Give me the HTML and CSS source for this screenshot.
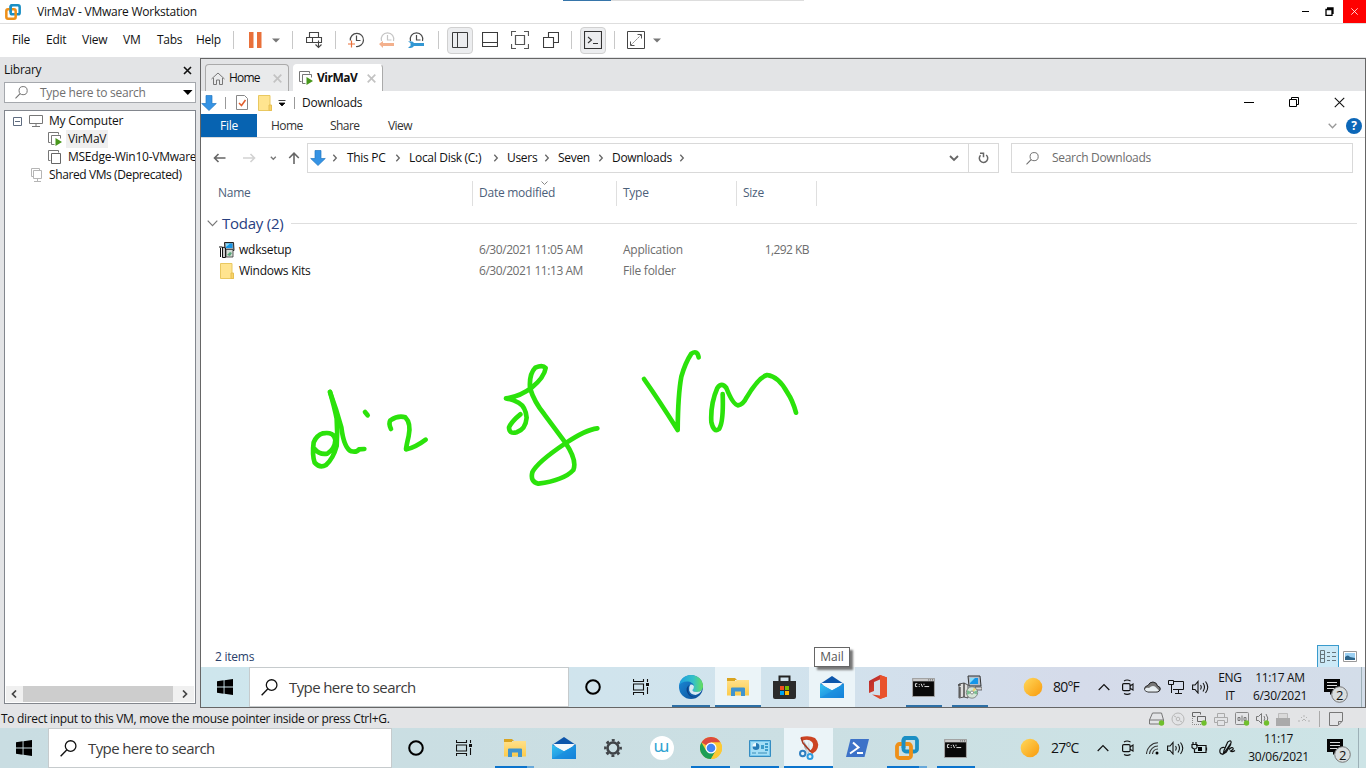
FILE: index.html
```html
<!DOCTYPE html>
<html lang="en">
<head>
<meta charset="utf-8">
<title>VirMaV - VMware Workstation</title>
<link rel="stylesheet" href="styles.css">
</head>
<body>
<svg class="defs" width="0" height="0">
  <defs>
    <linearGradient id="sunG" x1="0" y1="0" x2="1" y2="1"><stop offset="0" stop-color="#ffd95c"/><stop offset="1" stop-color="#f99a0c"/></linearGradient>
    <linearGradient id="edgeA" x1="0" y1="0" x2="1" y2="0"><stop offset="0" stop-color="#1b9de0"/><stop offset=".6" stop-color="#35c1c6"/><stop offset="1" stop-color="#66e05a"/></linearGradient>
    <linearGradient id="edgeB" x1="0" y1="0" x2="1" y2="1"><stop offset="0" stop-color="#1b8fdc"/><stop offset="1" stop-color="#0c4a94"/></linearGradient>
    <linearGradient id="foldG" x1="0" y1="0" x2="0" y2="1"><stop offset="0" stop-color="#ffe08a"/><stop offset="1" stop-color="#fccb4b"/></linearGradient>
    <linearGradient id="offG" x1="0" y1="0" x2="1" y2="1"><stop offset="0" stop-color="#b3252c"/><stop offset="1" stop-color="#f0592b"/></linearGradient>
    <linearGradient id="mailG" x1="0" y1="0" x2="1" y2="1"><stop offset="0" stop-color="#35c3f3"/><stop offset="1" stop-color="#1277d3"/></linearGradient>
  </defs>
  <symbol id="vmware" viewBox="0 0 24 24"><rect x="8.500" y="2" width="13.500" height="13.500" rx="2.500" fill="none" stroke="#1b8fc4" stroke-width="3.800"/><rect x="2" y="8" width="14" height="14" rx="2.500" fill="none" stroke="#ee9019" stroke-width="3.800"/><path d="M8.500 12V4.500q0-2.500 2.500-2.500" fill="none" stroke="#1b8fc4" stroke-width="3.800"/></symbol>
  <symbol id="lens" viewBox="0 0 16 16"><circle cx="10" cy="5.7" r="5" fill="none" stroke="currentColor" stroke-width="1.2"/><path d="M6.3 9.4.6 15.3" stroke="currentColor" stroke-width="1.3"/></symbol>
  <symbol id="win" viewBox="0 0 16 16"><path d="M0 2.3 6.6 1.3V7.6H0zM7.5 1.2 16 0V7.6H7.500zM0 8.500h6.600v6.200L0 13.800zM7.500 8.500H16V16L7.500 14.800z"/></symbol>
  <symbol id="task" viewBox="0 0 16 16"><path d="M.5 0v2.500h10V0M.5 16v-2.500h10V16M.5 5h10v6H.5zM14.500 0v3M14.500 8v7" fill="none" stroke="#111" stroke-width="1.100"/><path d="M13 4h3v3h-3z" fill="#111"/></symbol>
  <symbol id="down" viewBox="0 0 16 16"><path d="M5 .5h6v8h4.300L8 15.500.7 8.500H5z" fill="#3593e4" stroke="#2478c2" stroke-width=".7"/></symbol>
  <symbol id="folder" viewBox="0 0 14 16"><path d="M.5.500h11.500V11l1.500.5V15.500H.5z" fill="#ffe48f" stroke="#e9c860"/><path d="M11 10h2.500v5.500H11z" fill="#f8d368" stroke="#e6bf52"/></symbol>
  <symbol id="explorer" viewBox="0 0 22 18"><path d="M0 0h8l2 2h-2v2H0z" fill="#d9a420"/><path d="M0 3h8l2-1h12v15.500H0z" fill="url(#foldG)"/><path d="M4 18v-7.500q0-1 1-1h12q1 0 1 1V18h-4v-4.500H8V18z" fill="#3f94cf"/></symbol>
  <symbol id="mail" viewBox="0 0 24 22"><path d="M0 8 12 0l12 8v3H0z" fill="#0c55ab"/><path d="M1 7h22L12 17z" fill="#f4f8fc"/><path d="M0 7.500 12 14 24 7.500V22H0z" fill="url(#mailG)"/><path d="M2 8.500 22 8.500 12 14z" fill="#f4f8fc"/><path d="M0 22 24 8v14z" fill="#178bdf" opacity=".55"/></symbol>
  <symbol id="cmd" viewBox="0 0 24 20"><path d="M.5.500h23v19H.5z" fill="#090909" stroke="#a5a5a5"/><path d="M1 1h22v2.500H1z" fill="#c9c9c9"/><path d="M17 2h1M19 2h1M21 2h1" stroke="#444"/><path d="M5.500 6H3.500v3h2M7.500 6.500v1M7.500 8.500v1M9.500 6l1.500 3.500M12.500 6v1.500M13 9h5" fill="none" stroke="#e8e8e8"/></symbol>
  <symbol id="setup" viewBox="0 0 24 24"><path d="M10 1h12l1 10H11z" fill="#b5bfca" stroke="#333"/><path d="M12 3h8v6h-8z" fill="#1595e8"/><path d="M12 3h5l-5 5z" fill="#89dcf8"/><path d="M17 12h7v3h-6z" fill="#d5d5d5" stroke="#444" stroke-width=".7"/><path d="M1 9l5-1v14l-5 1zM6 8l4 2v13l-4-1z" fill="#dedede" stroke="#444" stroke-width=".9"/><path d="M0 10h3M2 12v10" stroke="#222"/><circle cx="14" cy="17.500" r="5.700" fill="#d5e5d7" stroke="#666" stroke-width=".7"/><path d="M14 17.500 9 15v5zM14 17.500l5-2v4z" fill="#7bbd91"/><path d="m14 17.500 2-5 2 2z" fill="#eed26e"/><circle cx="14" cy="17.500" r="1.500" fill="#fff" stroke="#555" stroke-width=".6"/></symbol>
  <symbol id="setupsm" viewBox="0 0 16 16"><path d="M5.500.5h9l.5 8H6z" fill="#9aa6b0" stroke="#222"/><path d="M7 1.500h6.500V6H7z" fill="#1595e8"/><path d="M7 1.500h4L7 5z" fill="#89dcf8"/><path d="M0 5h3M1.500 6v9M3.500 5v10.500h3V6z" fill="#ccc" stroke="#111"/><path d="M7 7.500h7V15H7z" fill="#d4ddd5" stroke="#333" stroke-width=".8"/><path d="M8 13l3-3 2 1-2 3z" fill="#59a578"/></symbol>
  <symbol id="sun" viewBox="0 0 20 20"><circle cx="10" cy="10" r="9.300" fill="url(#sunG)"/></symbol>
  <symbol id="up" viewBox="0 0 12 8"><path d="m.7 7 5.300-5.500L11.300 7" fill="none" stroke="#111" stroke-width="1.200"/></symbol>
  <symbol id="meet" viewBox="0 0 12 16"><rect x=".6" y="4.600" width="7.500" height="7" rx="1.200" fill="none" stroke="#111" stroke-width="1.200"/><path d="m8 7 3-2v6L8 9.300M2 2q3-2 6.500 0M2 14.500q3 1.700 6.500 0" fill="none" stroke="#111" stroke-width="1.100"/></symbol>
  <symbol id="sound" viewBox="0 0 17 14"><path d="M.6 5h2.400l3-3.500v11.500L3 9.500H.6zM8.500 5q1.500 2 0 4.500M11 3q3 4 0 8.500M13.500 1.500q4.500 5.500 0 11.500" fill="none" stroke="#111" stroke-width="1.100"/></symbol>
  <symbol id="note" viewBox="0 0 25 24"><path d="M0 0h16v13h-7l-3 3v-3H0z" fill="#050505"/><path d="M3 3.500h10M3 6.500h10M3 9.500h7" stroke="#ddd"/><circle cx="15.500" cy="15.500" r="7.800" fill="#d9dedf" stroke="#777"/></symbol>
  <symbol id="vms" viewBox="0 0 14 14"><path d="M2.500 10.500H.5V.5h10v2" fill="none" stroke="#777"/><path d="M3.500 3.500h9v10h-9z" fill="#fff" stroke="#666"/></symbol>
  <symbol id="vmrun" viewBox="0 0 14 14"><path d="M2.500 10.500H.5V.5h10v2M6.500 12.500h-3v-9h9v3" fill="none" stroke="#777"/><path d="M7.500 6v8L14 10z" fill="#48971c"/></symbol>
  <symbol id="gt" viewBox="0 0 6 8"><path d="m1.300.8 3 3.200-3 3.200" fill="none" stroke="#666" stroke-width="1.300"/></symbol>
  <symbol id="clock" viewBox="0 0 18 16"><path d="M2.300 8.500A6.600 6.600 0 1 1 8 14.500M8.500 3.500v5h4" fill="none" stroke="currentColor" stroke-width="1.200"/></symbol>
  <symbol id="clocktop" viewBox="0 0 18 16"><path d="M2.500 9A6.300 6.300 0 1 1 14.500 9M8.500 3v5h4" fill="none" stroke="currentColor" stroke-width="1.200"/></symbol>
  <symbol id="x" viewBox="0 0 10 10"><path d="m.7.700 8.600 8.600M9.300.700.7 9.300" fill="none" stroke="currentColor"/></symbol>
</svg>

<div class="screen">
  <header class="titlebar">
    <svg width="16" height="16"><use href="#vmware"/></svg>
    <span class="title">VirMaV - VMware Workstation</span>
    <span class="peek"></span>
    <svg width="8" height="8"><path d="M0 3.500h7" stroke="#000"/></svg>
    <svg width="9" height="9"><path d="M1 2.500h6V8.500H1zM2 1h6v6" fill="none" stroke="#000" stroke-width="1.300"/></svg>
    <span class="close"><svg width="7" height="7" viewBox="0 0 7 7"><path d="m.3.300 6.400 6.400M6.700.300.3 6.700" stroke="#fff" stroke-width=".8"/></svg></span>
  </header>

  <nav class="menubar">
    <span>File</span><span>Edit</span><span>View</span><span>VM</span><span>Tabs</span><span>Help</span>
    <i class="sep"></i>
    <svg width="13" height="16"><path d="M0 0h4.500v16H0zM8 0h4.500v16H8z" fill="#e9703a"/></svg>
    <svg width="8" height="5"><path d="M0 .500h8L4 4.500z" fill="#777"/></svg>
    <i class="sep"></i>
    <svg width="17" height="17"><path d="M3.500 5.500V.5h9v5M.5 5.500h15v5H.5zM6.500 5.500v5M12.500 8.500v7M9.500 12.500l3 3 3-3" fill="none" stroke="#444" stroke-width="1.100"/></svg>
    <i class="sep"></i>
    <svg class="dark" width="18" height="16"><use href="#clock"/><path d="M0 12h7M3.500 8.500v7" stroke="#e9703a" stroke-width="1.200"/></svg>
    <svg class="pale" width="18" height="16"><use href="#clocktop"/><path d="M0 12 4 9v2h11v3H4v2z" fill="#f3b08c"/></svg>
    <svg class="dark" width="18" height="16"><use href="#clocktop"/><path d="M0 9.500q5-1 6 1.500h10v3H6Q4 17 0 15.500l2.500-1.500v-3z" fill="#3297d3"/></svg>
    <i class="sep"></i>
    <b class="tool on"><svg width="16" height="16"><path d="M.5.500h15v15H.5zM5.500.500v15" fill="none" stroke="#3b3b3b"/></svg></b>
    <b class="tool"><svg width="16" height="16"><path d="M.5.500h15v14H.5zM.5 10.500h15" fill="none" stroke="#3b3b3b" stroke-width="1.100"/></svg></b>
    <b class="tool"><svg width="18" height="18"><path d="M.5 5V.5H5M13 .500h4.500V5M17.500 13v4.500H13M5 17.500H.5V13M4.500 4.500h9v9h-9z" fill="none" stroke="#555" stroke-width="1.200"/></svg></b>
    <b class="tool"><svg width="16" height="16"><path d="M5.500 5V.5h10v10H11M.5 5.500h10v10H.5z" fill="none" stroke="#3b3b3b" stroke-width="1.100"/></svg></b>
    <i class="sep"></i>
    <b class="tool on"><svg width="18" height="18"><path d="M.5.500h17v17H.5zM4 6l3.500 3L4 12M9 12.500h5" fill="none" stroke="#333" stroke-width="1.100"/></svg></b>
    <i class="sep"></i>
    <b class="tool"><svg width="18" height="18"><path d="M.5.500h17v17H.5z" fill="none" stroke="#444"/><path d="M10.500 3.500h4v4M3.500 10.500v4h4" fill="none" stroke="#555"/><path d="M14 4 4 14" stroke="#777" stroke-dasharray="2 1"/></svg></b>
    <svg width="8" height="5"><path d="M0 .500h8L4 4.500z" fill="#777"/></svg>
  </nav>

  <main class="work">
    <aside class="library">
      <div class="lib-head"><span>Library</span><svg width="9" height="9"><path d="m1 1 7 7M8 1 1 8" stroke="#111" stroke-width="1.600"/></svg></div>
      <div class="lib-search"><svg width="13" height="13"><use href="#lens"/></svg><span>Type here to search</span><svg width="10" height="6"><path d="M0 0h9.500L4.800 5z"/></svg></div>
      <div class="tree">
        <div class="node root"><svg width="9" height="9"><path d="M.5.500h8v8h-8zM2 4.500h5" fill="none" stroke="#5f6c80"/></svg><svg width="14" height="12"><path d="M.5.500h13v8H.5zM7 9v2M3 11.500h8" fill="none" stroke="#777"/></svg><span>My Computer</span></div>
        <div class="node"><svg width="14" height="14"><use href="#vmrun"/></svg><span class="sel">VirMaV</span></div>
        <div class="node"><svg width="14" height="14"><use href="#vms"/></svg><span class="long">MSEdge-Win10-VMware</span></div>
        <div class="node shared"><svg width="12" height="14"><path d="M2.500 8.500h-2v-8h8v2M2.500 2.500h8v8h-8zM6.500 11v2M3 13.500h7" fill="none" stroke="#b5b5b5"/></svg><span class="snug">Shared VMs (Deprecated)</span></div>
        <div class="hscroll"><svg width="6" height="8"><path d="M5 .5 1.500 4 5 7.500" fill="none" stroke="#444" stroke-width="1.700"/></svg><i></i><svg width="6" height="8"><path d="M1 .5 4.500 4 1 7.500" fill="none" stroke="#444" stroke-width="1.700"/></svg></div>
      </div>
    </aside>

    <section class="console">
      <div class="tabs">
        <div class="tab"><svg width="14" height="13"><path d="m.5 7 6.500-6 6.500 6M2.500 6v6.500h3V8h3v4.500h3V6" fill="none" stroke="#777"/></svg><span class="snug">Home</span><svg width="9" height="9"><path d="m.7.700 7.600 7.600M8.300.700.7 8.300" stroke="#c3c3c3" stroke-width="1.700"/></svg></div>
        <div class="tab active"><svg width="14" height="14"><use href="#vmrun"/></svg><span>VirMaV</span><svg width="9" height="9"><path d="m.7.700 7.600 7.600M8.300.700.7 8.300" stroke="#c3c3c3" stroke-width="1.700"/></svg></div>
      </div>

      <div class="explorer">
        <div class="quick">
          <svg width="16" height="16"><use href="#down"/></svg><i></i>
          <svg width="12" height="15"><path d="M.5.500h8l3 3v11H.5z" fill="#fff" stroke="#888"/><path d="m3 8 2.500 2.500L9.500 5" fill="none" stroke="#e15e2d" stroke-width="1.500"/></svg>
          <svg width="14" height="16"><use href="#folder"/></svg>
          <svg width="8" height="8"><path d="M.5 1.500h7M1 4h6L4 7z" stroke="#111" stroke-width=".8"/></svg><i></i>
          <span>Downloads</span>
          <svg width="10" height="10"><path d="M0 4.500h10" stroke="#000"/></svg>
          <svg width="11" height="11"><path d="M.5 2.500h7v7h-7zM2.500 2V.5h7v7H8" fill="none" stroke="#000"/></svg>
          <svg width="11" height="11"><use href="#x"/></svg>
        </div>
        <div class="ribbon">
          <b>File</b><span>Home</span><span>Share</span><span>View</span>
          <svg width="9" height="6"><path d="m.7.700 3.800 4 3.800-4" fill="none" stroke="#999" stroke-width="1.300"/></svg>
          <em>?</em>
        </div>
        <div class="address">
          <svg width="13" height="10"><path d="M12.500 5H1.500M5.500 1l-4 4 4 4" fill="none" stroke="#666" stroke-width="1.600"/></svg>
          <svg width="13" height="10"><path d="M0 5h11.500M7.500 1l4 4-4 4" fill="none" stroke="#d2d2d2" stroke-width="1.600"/></svg>
          <svg width="7" height="5"><path d="m.8.800 2.500 2.500L5.800.800" fill="none" stroke="#777" stroke-width="1.300"/></svg>
          <svg width="12" height="12"><path d="M6 12V1.500M1.200 6 6 1.200 10.800 6" fill="none" stroke="#666" stroke-width="1.600"/></svg>
          <div class="crumbs">
            <svg width="16" height="16"><use href="#down"/></svg><svg width="6" height="8"><use href="#gt"/></svg>
            <span>This PC</span><svg width="6" height="8"><use href="#gt"/></svg>
            <span>Local Disk (C:)</span><svg width="6" height="8"><use href="#gt"/></svg>
            <span>Users</span><svg width="6" height="8"><use href="#gt"/></svg>
            <span>Seven</span><svg width="6" height="8"><use href="#gt"/></svg>
            <span>Downloads</span><svg width="6" height="8"><use href="#gt"/></svg>
            <svg width="10" height="7"><path d="m1 1 4 4 4-4" fill="none" stroke="#666" stroke-width="1.800"/></svg>
            <div class="refresh"><svg width="11" height="12" viewBox="0 0 11 12"><path d="M8.200 3A4.200 4.200 0 1 1 2.500 3.300M2 1.200h3.500v4" fill="none" stroke="#666" stroke-width="1.500"/></svg></div>
          </div>
          <div class="find"><svg width="13" height="13"><use href="#lens"/></svg><span>Search Downloads</span></div>
        </div>
        <div class="columns"><span>Name</span><span>Date modified<svg width="7" height="4"><path d="m.5.500 3 3 3-3" fill="none" stroke="#888"/></svg></span><span>Type</span><span>Size</span></div>
        <div class="group"><svg width="11" height="7"><path d="m.7.700 4.800 5 4.800-5" fill="none" stroke="#777" stroke-width="1.200"/></svg><span>Today (2)</span><i></i></div>
        <div class="file"><svg width="16" height="16"><use href="#setupsm"/></svg><b>wdksetup</b><span class="date">6/30/2021 11:05 AM</span><span>Application</span><span class="size">1,292 KB</span></div>
        <div class="file"><svg class="dir" width="14" height="16"><use href="#folder"/></svg><b>Windows Kits</b><span class="date">6/30/2021 11:13 AM</span><span>File folder</span><span></span></div>
        <svg class="ink" viewBox="201 282 1164 363">
          <g transform="translate(290 340) scale(.33333)">
            <path d="M120 156Q134 204 140 236Q143 275 140 318Q130 355 108 375Q90 386 74 368Q66 345 71 307Q80 286 99 280Q132 274 136 300Q135 326 112 341Q88 345 74 327"/>
            <path d="M120 156Q140 210 154 262Q162 325 184 334Q200 338 207 328L223 327"/>
            <path d="M225 216l8 10"/>
            <path d="M303 267Q295 250 301 241Q325 225 346 232Q364 250 356 288Q349 318 348 328Q374 324 407 299"/>
            <path d="M691 223Q665 244 657 262Q657 283 680 277Q707 268 710 233Q707 200 686 188Q668 178 648 175Q690 170 725 143Q763 112 767 84Q758 73 736 83Q717 102 720 144Q732 185 763 223L826 308Q862 361 850 390Q822 421 745 431Q720 425 727 397Q741 367 826 310Q887 269 922 265"/>
          </g>
          <g transform="translate(610 340) scale(.33333)">
            <path d="M102 117Q145 178 203 270Q204 164 214 110Q226 68 244 41Q262 29 266 52"/>
            <path d="M338 162Q341 248 327 267Q311 279 304 246Q301 192 322 144Q335 125 349 144Q369 194 384 196Q399 195 410 172Q446 112 471 105Q506 109 532 158Q548 181 558 218"/>
          </g>
        </svg>
        <div class="foot"><span>2 items</span>
          <b><svg width="16" height="13"><path d="M.5.500h4v12h-4zM.5 4.500h4M.5 8.500h4M7 2.500h3M12 2.500h4M7 6.500h3M12 6.500h4M7 10.500h3M12 10.500h4" fill="none" stroke="#66757c"/></svg></b>
          <svg width="14" height="11"><path d="M.5.500h13v10H.5z" fill="#fff" stroke="#999"/><path d="M2 2h10v7H2z" fill="#9bd0f3"/><path d="M2 6q3-3 5 0l5 1v2H2z" fill="#2c6489"/></svg>
        </div>
      </div>

      <div class="bar guest">
        <div class="cell"><svg width="16" height="16"><use href="#win"/></svg></div>
        <div class="search"><svg width="17" height="17"><use href="#lens"/></svg><span>Type here to search</span></div>
        <div class="cell"><svg width="16" height="16"><circle cx="8" cy="8" r="6.800" fill="none" stroke="#000" stroke-width="2"/></svg></div>
        <div class="cell early"><svg width="16" height="16"><use href="#task"/></svg></div>
        <div class="cell run"><svg width="24" height="24" viewBox="0 0 24 24"><circle cx="12" cy="12" r="12" fill="url(#edgeB)"/><path d="M.3 10C1.500 3.500 6.500 0 12 0c7 0 12 5 12 11 0 4-3 6-6 6-3 0-4.500-1.200-4.500-2 0-.7 1.500-1.500 1.500-3.500C15 8.500 11.500 6.500 8 6.500 4 6.500 1.300 8.500.3 10z" fill="url(#edgeA)"/><path d="M10 10q-4 3-1.500 8 3 5.500 9.500 4-7 .5-8.500-5-.8-4 .5-7z" fill="#0b3f86"/><path d="M15 11.500q0 2-1.500 3.500c0 1 1.500 2 4.500 2q3 0 5-2-2 4-6.500 5-5-.5-6.300-4.500-.7-3.500 1.300-6 3-.5 3.500 2z" fill="#d7eaf3"/></svg></div>
        <div class="cell run lit"><svg width="22" height="18"><use href="#explorer"/></svg></div>
        <div class="cell early"><svg width="23" height="25"><path d="M6.500 7V1.500h10V7" fill="none" stroke="#222" stroke-width="2"/><path d="M0 6h23v16q0 2-2 2H2q-2 0-2-2z" fill="#2b2b2b"/><path d="M7 11h4v4H7z" fill="#f25022"/><path d="M12 11h4v4h-4z" fill="#7fba00"/><path d="M7 16h4v4H7z" fill="#00a4ef"/><path d="M12 16h4v4h-4z" fill="#ffb900"/></svg></div>
        <div class="cell lit tip"><svg width="24" height="22"><use href="#mail"/></svg><span class="tooltip">Mail</span></div>
        <div class="cell"><svg width="18" height="24"><path d="M0 6 11 0l7 2.500v19L11 24 3 19.500l8 1V4.500L5 7v9L0 18z" fill="url(#offG)"/><path d="m11 0 7 2.500v19L11 24z" fill="#e9532c"/></svg></div>
        <div class="cell run early"><svg width="23" height="19"><use href="#cmd"/></svg></div>
        <div class="cell run"><svg width="24" height="24"><use href="#setup"/></svg></div>
        <div class="tray">
          <svg width="20" height="20"><use href="#sun"/></svg><span class="temp">80°F</span>
          <svg width="12" height="8"><use href="#up"/></svg>
          <svg width="12" height="16"><use href="#meet"/></svg>
          <svg width="17" height="12"><path d="M4 11Q.5 10.500.5 7.500 1 5 4 4.500 5.500 1 9 1q4 .5 4.500 4 2.800.5 2.800 3-.3 2.500-3 3z" fill="#777" stroke="#222"/><path d="M4 10.500Q1 10 1 8q2-2 4-1 3-3 6-1.500l4 4q-1 1-3 1z" fill="#e7eef2"/></svg>
          <svg width="16" height="14"><path d="M5 1.500h10.500v8H5M10.500 10v3M7 13.500h7M.5.500h5v4H.5zM3.500 5v8" fill="none" stroke="#111"/></svg>
          <svg width="17" height="14"><use href="#sound"/></svg>
          <span class="stack">ENG<br>IT</span><span class="stack wide">11:17 AM<br>6/30/2021</span>
          <div class="note"><svg width="25" height="24"><use href="#note"/></svg><span>2</span></div>
          <i></i>
        </div>
      </div>
    </section>
  </main>

  <div class="status">
    <span>To direct input to this VM, move the mouse pointer inside or press Ctrl+G.</span>
    <svg width="16" height="14"><path d="M3.500 1h9l2 7v4H.5V8zM.5 8h14" fill="none" stroke="#777"/><circle cx="12.500" cy="11" r="2.700" fill="#70bf2d"/></svg>
    <svg width="14" height="14"><circle cx="7" cy="7" r="6" fill="none" stroke="#b7b7b7"/><circle cx="7" cy="7" r="1.800" fill="none" stroke="#b7b7b7"/><path d="m3 4 2 1M9 9l2 1" stroke="#b7b7b7"/></svg>
    <svg width="15" height="14"><path d="M3.500 4.500h-3v-4h8v2M5.500 4.500h8v5h-8z" fill="none" stroke="#666"/><path d="M.5 6v6.500H9" fill="none" stroke="#888" stroke-dasharray="1 1"/><circle cx="12" cy="11" r="2.700" fill="#70bf2d"/></svg>
    <svg width="14" height="13"><path d="M3.500 4V.5h7V4M3.500 9.500h-3v-5h13v5h-3M3.500 7.500h7v5h-7z" fill="none" stroke="#aaa"/></svg>
    <svg width="15" height="14"><rect x=".5" y=".5" width="13" height="12" rx="1" fill="none" stroke="#888"/><path d="M3 5.500h2v3H3zM7 3.500v6M9 5.500h2v3H9z" fill="none" stroke="#777"/><circle cx="11.500" cy="11" r="2.700" fill="#70bf2d"/></svg>
    <svg width="14" height="14"><path d="M.5 4.500h2l3-3v10l-3-3h-2zM8 4q1.500 2 0 5M10 2q3 4 1 8" fill="none" stroke="#777"/><circle cx="10.500" cy="11" r="2.700" fill="#70bf2d"/></svg>
    <svg width="14" height="13"><path d="M2.500.5h9V6h-9z" fill="#d9d9d9" stroke="#bbb"/><path d="M0 5h14v8H0z" fill="#aaa"/></svg>
    <svg width="12" height="8"><path d="M1 7V5M3 2l1 1M6 0v2M9 2 8 3M11 5v2M4 6l2-2 2 2" fill="none" stroke="#b5b5b5"/></svg>
    <i></i>
    <svg width="14" height="14"><path d="M.5.500h13V9L9 13.500H.5zM9.500 13V9.500H13" fill="none" stroke="#777"/></svg>
  </div>

  <footer class="bar host">
    <div class="cell"><svg width="16" height="16"><use href="#win"/></svg></div>
    <div class="search"><svg width="17" height="17"><use href="#lens"/></svg><span>Type here to search</span></div>
    <div class="cell"><svg width="16" height="16"><circle cx="8" cy="8" r="6.800" fill="none" stroke="#000" stroke-width="2"/></svg></div>
    <div class="cell early"><svg width="16" height="16"><use href="#task"/></svg></div>
    <div class="cell run multi"><svg width="22" height="18"><use href="#explorer"/></svg></div>
    <div class="cell"><svg width="24" height="22"><use href="#mail"/></svg></div>
    <div class="cell"><svg width="18" height="18"><circle cx="9" cy="9" r="5.500" fill="none" stroke="#404448" stroke-width="2.600"/><circle cx="9" cy="9" r="7.700" fill="none" stroke="#404448" stroke-width="2.400" stroke-dasharray="3 3.047" stroke-dashoffset="1.500"/></svg></div>
    <div class="cell"><span class="webex">ɯ</span></div>
    <div class="cell run"><svg width="22" height="22" viewBox="0 0 22 22"><circle cx="11" cy="11" r="11" fill="#fcc934"/><path d="M11 11 1.470 5.500A11 11 0 0 1 20.530 5.500H11z" fill="#dd4b3e"/><path d="M1.470 5.500A11 11 0 0 0 11 22l4.760-8.250L6.240 13.750z" fill="#1e9e56"/><path d="M11 5.500h9.530A11 11 0 0 1 11 22l4.760-8.250z" fill="#fcc934"/><circle cx="11" cy="11" r="5.500" fill="#fff"/><circle cx="11" cy="11" r="4.300" fill="#4285f4"/></svg></div>
    <div class="cell run"><svg width="22" height="17"><path d="M.5.500h21v16H.5z" fill="#76c6ed" stroke="#348dc2"/><path d="M2 2h18v13H2z" fill="#a4def6"/><circle cx="7" cy="6.500" r="3.500" fill="#eff9fc"/><path d="M7 6.500V3a3.500 3.500 0 1 1-3.500 3.500z" fill="#257bb6"/><path d="M12 5h3v4h-3M16 3h3v2h-3zM16 6h3v2h-3zM16 9h3v2h-3z" fill="#3c9ccb"/><path d="M3 13h4M9 13h9" stroke="#388db8"/></svg></div>
    <div class="cell run lit full"><svg width="20" height="24"><path d="M2 1Q10-1 16 2q6 6 1 13l-4 3-2-3q5-5 2-9Q9 2 3 5z" fill="#cc4423"/><path d="m5 5 6 10-2 3L5 11z" fill="#a9b1b6"/><path d="m10 4 1 9-3 6-1-3z" fill="#d9dfe2"/><path d="M2 1.500 4 7l8 9" fill="none" stroke="#a63620" stroke-width="1.500"/><circle cx="3.700" cy="17.500" r="2.700" fill="none" stroke="#2e7fc1" stroke-width="2"/><circle cx="11" cy="20.500" r="2.500" fill="none" stroke="#2e9cdf" stroke-width="2"/></svg></div>
    <div class="cell"><svg width="23" height="18"><path d="M4.500 0H23l-4.500 18H0z" fill="#3d72c8"/><path d="m7 3.500 5.500 5L4 14.500M11 14h6" fill="none" stroke="#fff" stroke-width="2"/></svg></div>
    <div class="cell run multi"><svg width="24" height="24"><use href="#vmware"/></svg></div>
    <div class="cell run early"><svg width="23" height="19"><use href="#cmd"/></svg></div>
    <div class="tray">
      <svg width="20" height="20"><use href="#sun"/></svg><span class="temp">27°C</span>
      <svg width="12" height="8"><use href="#up"/></svg>
      <svg width="12" height="16"><use href="#meet"/></svg>
      <svg width="13" height="13"><path d="M.5 12A11.500 11.500 0 0 1 12 .800M3.500 12A8.500 8.500 0 0 1 12 4M6.500 12A5.500 5.500 0 0 1 12 7" fill="none" stroke="#333" stroke-width="1.100"/><circle cx="11" cy="11" r="1.500"/></svg>
      <svg width="17" height="14"><use href="#sound"/></svg>
      <svg width="17" height="14"><path d="M5 4.500h10v7H6M15.500 6.500v3M1 3.500h5v3q-2 3-5 0zM2 1v2M5 1v2M3.500 8v3.500H6" fill="none" stroke="#111" stroke-width="1.200"/><path d="M7 6h4v4H7z"/></svg>
      <svg width="17" height="16"><path d="M5.500 7.500Q1 7 .8 11q0 3.500 3.500 3L12 3q.5-2.500-1.500-2T8 3.500L5 10.500l-.7 3.500 3-2L12 4M10 9.500q3-3 4-1.500t-2.500 3q1.500 1.500 4.500-.5" fill="none" stroke="#111" stroke-width="1.200"/></svg>
      <span class="stack wide">11:17<br>30/06/2021</span>
      <div class="note"><svg width="25" height="24"><use href="#note"/></svg><span>2</span></div>
      <i></i>
    </div>
  </footer>
</div>
</body>
</html>
```

FILE: styles.css
```css
* { box-sizing: border-box; }
body { margin: 0; background: #e3e4e6; font: 12px/16px "Open Sans", "Noto Sans", sans-serif; letter-spacing: -.25px; color: #111; overflow: hidden; }
svg { display: block; flex: none; }
span, b { white-space: nowrap; font-weight: 400; }
.defs { position: absolute; }
.screen { width: 1366px; height: 768px; display: grid; grid-template-rows: 24px 33px 651px 20px 40px; }

.titlebar { display: grid; grid-template-columns: 32px 526px 739px 23px 18px 23px; padding-left: 5px; align-items: center; background: #fff; border-bottom: 1px solid #dedede; }
.peek { width: 241px; height: 1px; align-self: start; background: linear-gradient(90deg, #3675aa 48px, #ddd 48px); }
.close { display: grid; place-items: center; height: 23px; background: #f00; color: #fff; }

.menubar { display: grid; align-items: center; padding: 0 0 1px 12px; background: #fff; grid-template-columns: 34px 36px 41px 34px 39px 37px 16px 23px 20px 14px 29px 13px 31px 29px 30px 9px 30px 30px 31px 33px 9px 34px 9px 30px 9px; }
.sep { width: 1px; height: 18px; background: #c8c8c8; }
.tool { display: grid; place-items: center; width: 26px; height: 27px; border-radius: 4px; border: 1px solid transparent; }
.tool.on { background: #ecedef; border-color: #d0d0d0; }
.dark { color: #4a4a4a; }
.pale { color: #c5c5c5; }
.snug { letter-spacing: -.4px; }

.work { display: grid; grid-template-columns: 200px 1166px; }
.library { padding: 5px 4px 0 4px; display: grid; grid-template-rows: 20px 21px 593px; row-gap: 0; }
.lib-head { display: flex; justify-content: space-between; padding: 0 4px 0 0; align-items: center; height: 16px; }
.lib-search { display: grid; grid-template-columns: 25px 143px 12px; align-items: center; padding-left: 10px; height: 21px; border: 1px solid #a5a8ad; background: #fff; color: #707070; }
.lib-search svg:last-child { color: #000; }
.tree { margin-top: 7px; height: 594px; border: 1px solid #82868d; background: #fff; padding-top: 1px; display: flex; flex-direction: column; overflow: hidden; }
.node { display: grid; grid-template-columns: 20px 130px; padding-left: 43px; height: 18px; align-items: center; flex: none; }
.node.root { grid-template-columns: 16px 20px 100px; padding-left: 8px; letter-spacing: -.2px; }
.node.shared { grid-template-columns: 18px 150px; padding-left: 26px; }
.sel { background: #efefef; width: 42px; margin-left: -2px; padding-left: 2px; height: 18px; line-height: 18px; }
.hscroll { margin: auto 1px 1px; height: 16px; display: grid; grid-template-columns: 12px 150px 15px; padding-left: 5px; align-items: center; background: #f0f0f0; }
.hscroll i { height: 16px; background: #cdcdcd; }
.hscroll svg:last-child { margin-left: 9px; }

.console { margin-top: 1px; border: 1px solid #666; height: 650px; display: grid; grid-template-rows: 32px 576px 40px; }
.tabs { display: flex; align-items: end; gap: 4px; padding-left: 4px; }
.tab { display: grid; grid-template-columns: 18px 44px 10px; align-items: center; width: 84px; height: 27px; padding-left: 5px; border: 1px solid #aaa; border-bottom: 0; border-radius: 4px 4px 0 0; background: #e9eaeb; }
.tab .snug { letter-spacing: -.8px; }
.tab.active { grid-template-columns: 18px 50px 10px; width: 90px; background: #fff; border-color: #fff #aaa #fff #fff; }
.tab.active span { font-weight: 700; letter-spacing: -.5px; }

.explorer { background: #fff; display: grid; grid-template-rows: 23px 24px 43px 25px 34px 21px 21px 363px 22px; }
.quick { display: grid; align-items: center; grid-template-columns: 24px 11px 22px 20px 16px 8px 942px 45px 45px 11px; }
.quick i { width: 1px; height: 12px; background: #999; }
.ribbon { display: grid; align-items: center; grid-template-columns: 56px 14px 59px 58px 940px 18px 17px; border-bottom: 1px solid #dadada; color: #333; }
.ribbon b { align-self: stretch; background: #0763b1; color: #fff; text-align: center; line-height: 23px; }
.ribbon span { letter-spacing: -.55px; }
.ribbon span:nth-child(2) { grid-column: 3; }
.ribbon em { width: 16px; height: 16px; border-radius: 8px; background: #0c67b8; color: #fff; font: 700 12px/16px "Open Sans", sans-serif; text-align: center; }
.address { display: grid; grid-template-columns: 30px 27px 18px 19px 693px 353px; height: 30px; margin: 5px 0 0 12px; align-items: center; }
.crumbs { display: grid; grid-template-columns: 22px 15px 48px 14px 84px 14px 37px 14px 40px 14px 67px 270px 19px 30px; align-items: center; width: 692px; height: 30px; padding-left: 2px; border: 1px solid #d9d9d9; }
.crumbs span { letter-spacing: -.3px; }
.refresh { display: grid; place-items: center; height: 28px; border-left: 1px solid #d9d9d9; }
.find { display: grid; grid-template-columns: 26px 200px; align-items: center; height: 30px; padding-left: 14px; border: 1px solid #d9d9d9; margin-left: 11px; width: 342px; color: #6d6d6d; letter-spacing: -.3px; }
.columns { display: grid; grid-template-columns: 255px 144px 120px 80px; padding-left: 17px; color: #4c607a; height: 25px; line-height: 24px; }
.columns span { border-right: 1px solid #dfdfdf; padding-left: 6px; position: relative; }
.columns span:first-child { padding-left: 0; }
.columns svg { position: absolute; left: 68px; top: 0; }
.group { display: grid; grid-template-columns: 15px 69px 1066px; padding: 1px 0 0 6px; align-items: center; color: #28407f; font-size: 15px; }
.group span { margin-top: -1px; }
.group i { height: 1px; background: #dedede; }
.file { display: grid; grid-template-columns: 20px 240px 144px 120px 66px; padding: 0 0 2px 18px; align-items: center; color: #6d6d6d; }
.file b { color: #111; }
.dir { margin-left: 1px; }
.date { letter-spacing: -.45px; }
.size { text-align: right; letter-spacing: -.55px; }
.ink { width: 1164px; height: 363px; }
.ink path { fill: none; stroke: #2be20b; stroke-width: 14; stroke-linecap: round; stroke-linejoin: round; }
.foot { display: grid; grid-template-columns: 1102px 26px 14px; padding: 0 0 4px 14px; align-items: center; color: #29406b; }
.foot b { display: grid; place-items: center; width: 22px; height: 23px; border: 1px solid #399bcd; background: #cce9f7; }

.bar { display: grid; height: 40px; }
.guest { grid-template-columns: 48px 320px 48px 50px 48px 46px 48px 46px 46px 46px 46px 372px; background: linear-gradient(90deg, #cee6ed, #d1e3ed 50%, #d5dbea 75%, #d3dde9); }
.host { grid-template-columns: 48px 344px 48px 50px 49px 49px 49px 49px 49px 49px 49px 49px 50px 48px 386px; background: linear-gradient(90deg, #c9dde2, #cbdfe3 60%, #cde4e6); }
.cell { display: grid; place-items: center; position: relative; }
.early { padding-right: 2px; }
.search { display: grid; grid-template-columns: 28px 200px; align-items: center; padding-left: 11px; border: 1px solid #c6cbcd; background: #fff; font-size: 15px; letter-spacing: -.6px; color: #3c3c3c; }
.search svg { color: #111; }
.lit { background: #ebf4f8; }
.run::after { content: ""; position: absolute; left: 5px; right: 5px; bottom: 0; height: 2px; background: #2e70a6; }
.guest .lit.run::after, .full.run::after { left: 0; right: 0; }
.host .run::after { background: #0b74cd; }
.host .full.run::after { left: 0; right: 0; }
.host .multi::after { background: linear-gradient(90deg, #0b74cd 32px, #66a8da 32px); }
.tooltip { position: absolute; left: 5px; top: -20px; width: 36px; height: 20px; border: 1px solid #666; background: #fff; box-shadow: 3px 3px 2px #777; color: #555; text-align: center; line-height: 18px; letter-spacing: 0; }
.webex { width: 24px; height: 24px; border-radius: 12px; background: #fff; color: #2fa3d1; font-size: 17px; line-height: 20px; letter-spacing: 0; text-align: center; }
.tray { display: grid; align-items: center; }
.guest .tray { padding-left: 30px; grid-template-columns: 30px 45px 24px 22px 24px 24px 19px 38px 62px 50px 1px; }
.host .tray { padding-left: 40px; grid-template-columns: 31px 46px 25px 24px 21px 24px 28px 25px 69px 45px 1px; }
.temp { font-size: 14px; letter-spacing: -.8px; }
.stack { text-align: center; line-height: 18px; letter-spacing: -.3px; }
.tray i { height: 40px; background: #9db0b7; }
.note { position: relative; margin-left: 13px; width: 25px; height: 24px; }
.note svg { margin-top: 4px; }
.note span { position: absolute; left: 12px; top: 12px; font-size: 13px; }
.host .note { margin-left: 14px; }
.host .note svg { margin-top: 3px; }
.host .note span { top: 11px; }

.status { display: grid; grid-template-columns: 1148px 22px 21px 22px 21px 21px 20px 22px 21px 10px 14px; align-items: center; padding: 2px 0 0 1px; background: #e3e4e6; }
.status span { letter-spacing: -.31px; }
.status i { width: 1px; height: 16px; background: #aaa; }
```
